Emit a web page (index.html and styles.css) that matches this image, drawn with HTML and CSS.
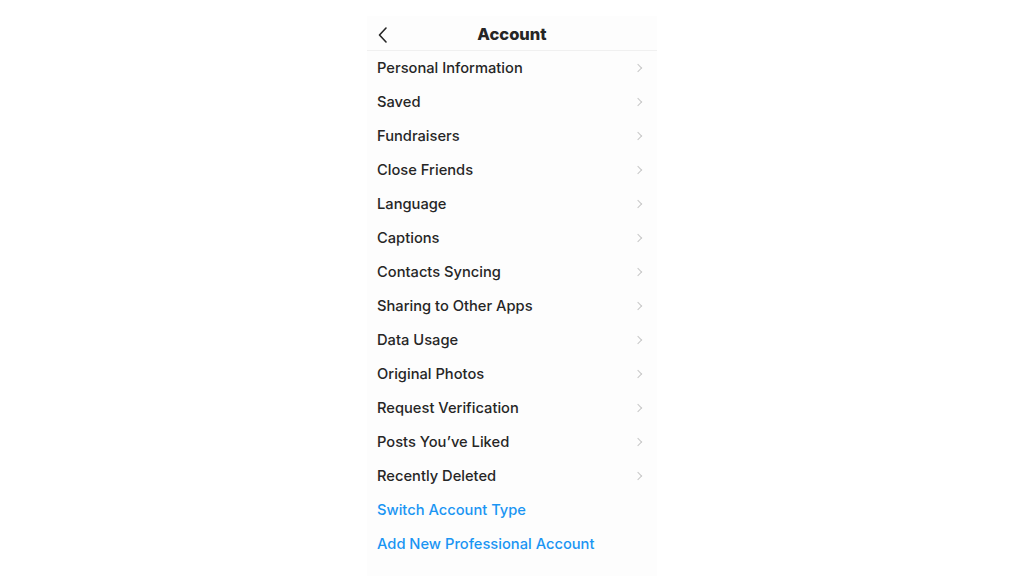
FILE: index.html
```html
<!DOCTYPE html>
<html lang="en">
<head>
    <meta charset="UTF-8">
    <meta name="viewport" content="width=device-width, initial-scale=1.0">
    <title>Account</title>
    <link rel="stylesheet" href="styles.css">
</head>
<body>
    <div class="screen">
        <header class="topbar">
            <span class="back">
                <svg width="12" height="16" viewBox="0 0 12 16"><path d="M9 1 L2.5 8 L9 15" fill="none" stroke="#262626" stroke-width="1.6" stroke-linecap="round" stroke-linejoin="round"/></svg>
            </span>
            <h1>Account</h1>
        </header>

        <ul class="menu">
            <li>Personal Information</li>
            <li>Saved</li>
            <li>Fundraisers</li>
            <li>Close Friends</li>
            <li>Language</li>
            <li>Captions</li>
            <li>Contacts Syncing</li>
            <li>Sharing to Other Apps</li>
            <li>Data Usage</li>
            <li>Original Photos</li>
            <li>Request Verification</li>
            <li>Posts You’ve Liked</li>
            <li>Recently Deleted</li>
            <li class="link">Switch Account Type</li>
            <li class="link">Add New Professional Account</li>
        </ul>
    </div>
</body>
</html>
```

FILE: styles.css
```css
body {
    margin: 0;
    background-color: #fff;
    font-family: Inter, "Noto Sans", sans-serif;
    color: #262626;
}

.screen {
    width: 290px;
    min-height: 560px;
    margin: 16px auto 0;
    background-color: #fdfdfd;
}

.topbar {
    position: relative;
    height: 35px;
    display: flex;
    align-items: center;
    justify-content: center;
    border-bottom: 1px solid #f0f0f0;
    box-sizing: border-box;
}

.back {
    position: absolute;
    left: 10px;
    top: 11px;
    line-height: 0;
}

.topbar h1 {
    margin: 0;
    font-size: 16.5px;
    font-weight: 800;
    padding-top: 2px;
}

.menu {
    list-style: none;
    margin: 0;
    padding: 0;
}

.menu li {
    height: 34px;
    display: flex;
    align-items: center;
    padding-left: 10px;
    font-size: 14.7px;
    font-weight: 500;
    position: relative;
}

.menu li::after {
    content: "";
    position: absolute;
    right: 16px;
    top: 14px;
    width: 5px;
    height: 5px;
    border-top: 1px solid #c7c7c7;
    border-right: 1px solid #c7c7c7;
    transform: rotate(45deg);
}

.menu li.link {
    color: #1a95f3;
}

.menu li.link::after {
    display: none;
}
```
